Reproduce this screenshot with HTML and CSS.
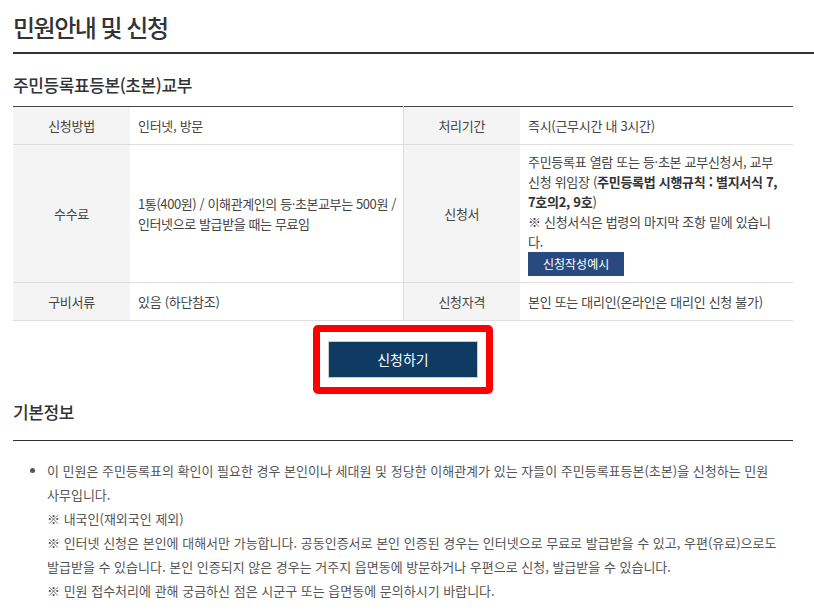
FILE: index.html
```html
<!DOCTYPE html>
<html lang="ko">
<head>
    <meta charset="UTF-8">
    <meta name="viewport" content="width=device-width, initial-scale=1.0">
    <title>민원안내 및 신청</title>
    <link rel="stylesheet" href="styles.css">
</head>
<body>
    <div class="page">
        <h2 class="page-title">민원안내 및 신청</h2>

        <h3 class="sec-title">주민등록표등본(초본)교부</h3>
        <table class="info-table">
            <colgroup>
                <col class="col-th">
                <col class="col-td">
                <col class="col-th">
                <col class="col-td">
            </colgroup>
            <tbody>
                <tr>
                    <th>신청방법</th>
                    <td>인터넷, 방문</td>
                    <th>처리기간</th>
                    <td>즉시(근무시간 내 3시간)</td>
                </tr>
                <tr>
                    <th>수수료</th>
                    <td class="fee-cell">1통(400원) / 이해관계인의 등·초본교부는 500원 / 인터넷으로 발급받을 때는 무료임</td>
                    <th>신청서</th>
                    <td class="form-cell">
                        주민등록표 열람 또는 등·초본 교부신청서, 교부 신청 위임장 (<strong>주민등록법 시행규칙 : 별지서식 7, 7호의2, 9호</strong>)<br>
                        ※ 신청서식은 법령의 마지막 조항 밑에 있습니다.
                        <div><a class="btn-sample" href="#">신청작성예시</a></div>
                    </td>
                </tr>
                <tr>
                    <th>구비서류</th>
                    <td>있음 (하단참조)</td>
                    <th>신청자격</th>
                    <td>본인 또는 대리인(온라인은 대리인 신청 불가)</td>
                </tr>
            </tbody>
        </table>

        <div class="apply-area">
            <span class="apply-mark">
                <a class="btn-apply" href="#">신청하기</a>
            </span>
        </div>

        <h3 class="sec-title sec-line">기본정보</h3>
        <ul class="info-list">
            <li>
                이 민원은 주민등록표의 확인이 필요한 경우 본인이나 세대원 및 정당한 이해관계가 있는 자들이 주민등록표등본(초본)을 신청하는 민원 사무입니다.
                <p>※ 내국인(재외국인 제외)</p>
                <p>※ 인터넷 신청은 본인에 대해서만 가능합니다. 공동인증서로 본인 인증된 경우는 인터넷으로 무료로 발급받을 수 있고, 우편(유료)으로도 발급받을 수 있습니다. 본인 인증되지 않은 경우는 거주지 읍면동에 방문하거나 우편으로 신청, 발급받을 수 있습니다.</p>
                <p>※ 민원 접수처리에 관해 궁금하신 점은 시군구 또는 읍면동에 문의하시기 바랍니다.</p>
            </li>
        </ul>
    </div>
</body>
</html>
```

FILE: styles.css
```css
body {
    margin: 0;
    padding: 0;
    font-family: 'Noto Sans CJK KR', 'Noto Sans', sans-serif;
    color: #444;
    background: #fff;
    overflow: hidden;
}
.page {
    padding: 0 21px 0 13px;
}
.page-title {
    margin: 0 -21px 0 0;
    padding: 10px 0 8px;
    font-size: 24px;
    line-height: 34px;
    font-weight: 500;
    letter-spacing: -1.5px;
    color: #333;
    border-bottom: 2px solid #333;
}
.sec-title {
    margin: 19px 0 9px;
    font-size: 17px;
    line-height: 24px;
    font-weight: 500;
    letter-spacing: -0.4px;
    color: #333;
}
.sec-line {
    margin: 6px 0 0;
    padding-bottom: 16px;
    border-bottom: 1px solid #333;
}
.info-table {
    width: 100%;
    border-collapse: collapse;
    border-top: 1px solid #444;
    border-bottom: 1px solid #444;
    font-size: 13px;
    line-height: 20px;
    letter-spacing: -0.3px;
}
.col-th {
    width: 15%;
}
.col-td {
    width: 35%;
}
.info-table th,
.info-table td {
    padding: 9px 8px 8px;
    border-bottom: 1px solid #ddd;
    vertical-align: middle;
}
.info-table th {
    background: #f4f4f4;
    font-weight: normal;
    color: #444;
    text-align: center;
    border-left: 1px solid #ddd;
}
.info-table th:first-child {
    border-left: none;
}
.info-table td {
    text-align: left;
}
.info-table td.fee-cell {
    padding-right: 0;
    letter-spacing: -0.4px;
}
.info-table td.form-cell {
    padding: 7px 8px 6px;
}
.info-table strong {
    color: #333;
}
.btn-sample {
    display: inline-block;
    padding: 0 15px;
    height: 24px;
    line-height: 24px;
    background: #284a7e;
    color: #fff;
    font-size: 12px;
    letter-spacing: 0;
    text-decoration: none;
}
.apply-area {
    margin-top: 4px;
    text-align: center;
}
.apply-mark {
    display: inline-block;
    padding: 9px 8px;
    border: 7px solid #f00;
    border-radius: 5px;
}
.btn-apply {
    display: block;
    width: 148px;
    height: 35px;
    line-height: 35px;
    border: 1px solid #c9ccd2;
    background: #0f3a62;
    color: #fff;
    font-size: 14px;
    text-decoration: none;
}
.info-list {
    margin: 18px 0 0;
    padding: 0 13px 0 34px;
    font-size: 13px;
    line-height: 24px;
    color: #555;
}
.info-list p {
    margin: 0;
}
```
